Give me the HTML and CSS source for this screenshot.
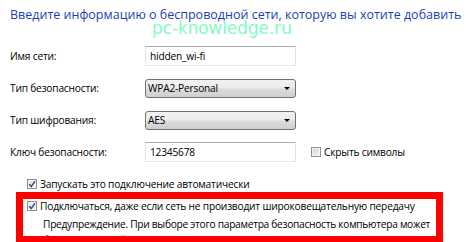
FILE: index.html
```html
<!DOCTYPE html>
<html lang="ru">
<head>
<meta charset="utf-8">
<title>Беспроводная сеть</title>
<link rel="stylesheet" href="styles.css">
</head>
<body>
<div class="dialog">
  <h1 class="title">Введите информацию о беспроводной сети, которую вы хотите добавить</h1>
  <div class="watermark">pc-knowledge.ru</div>

  <div class="form">
    <div class="row">
      <span class="label">Имя сети:</span>
      <div class="field input">hidden_wi-fi</div>
    </div>
    <div class="row">
      <span class="label">Тип безопасности:</span>
      <div class="field select"><span>WPA2-Personal</span><span class="arrow"></span></div>
    </div>
    <div class="row">
      <span class="label">Тип шифрования:</span>
      <div class="field select"><span>AES</span><span class="arrow"></span></div>
    </div>
    <div class="row">
      <span class="label">Ключ безопасности:</span>
      <div class="field input">12345678</div>
      <div class="check side"><span class="box"></span>Скрыть символы</div>
    </div>
  </div>

  <div class="checks">
    <div class="check"><span class="box checked"><svg viewBox="0 0 10 10"><path d="M2.2 5.2 L4.2 7.6 L8 2.2" /></svg></span>Запускать это подключение автоматически</div>
    <div class="check"><span class="box checked"><svg viewBox="0 0 10 10"><path d="M2.2 5.2 L4.2 7.6 L8 2.2" /></svg></span>Подключаться, даже если сеть не производит широковещательную передачу</div>
    <p class="warn">Предупреждение. При выборе этого параметра безопасность компьютера может<br>быть под угрозой.</p>
  </div>

  <div class="highlight"></div>
</div>
</body>
</html>
```

FILE: styles.css
```css
html, body {
  margin: 0;
  padding: 0;
  background: #ffffff;
}

body {
  width: 470px;
  height: 242px;
  overflow: hidden;
  font-family: "Open Sans", "Noto Sans", sans-serif;
  font-size: 10.2px;
  letter-spacing: -0.2px;
  color: #000000;
}

.dialog {
  position: relative;
  width: 470px;
  height: 242px;
  overflow: hidden;
}

.title {
  margin: 7px 0 0 10px;
  font-size: 12.5px;
  letter-spacing: 0;
  line-height: 16px;
  font-weight: normal;
  color: #1b3fb5;
  white-space: nowrap;
}

.watermark {
  position: absolute;
  left: 152px;
  top: 18px;
  font-family: "DejaVu Sans", Verdana, sans-serif;
  font-size: 16.8px;
  letter-spacing: 0;
  line-height: 20px;
  color: #80fcc2;
  white-space: nowrap;
}

.form {
  display: flex;
  flex-direction: column;
  gap: 12px;
  margin-top: 23px;
  padding-left: 10px;
}

.row {
  display: flex;
  align-items: center;
  height: 20px;
}

.label {
  width: 135px;
  flex: none;
  white-space: nowrap;
}

.field {
  box-sizing: border-box;
  width: 151px;
  height: 20px;
  flex: none;
  display: flex;
  align-items: center;
  white-space: nowrap;
}

.input {
  border: 1px solid #dfe4ea;
  border-top-color: #abadb3;
  border-bottom-color: #e3e9ef;
  padding-left: 4px;
  background: #ffffff;
}

.select {
  height: 19px;
  border: 1px solid #707070;
  border-radius: 3px;
  padding: 0 4px 0 2px;
  justify-content: space-between;
  background: linear-gradient(#f2f2f2 0%, #ebebeb 48%, #dddddd 52%, #cfcfcf 100%);
}

.arrow {
  width: 0;
  height: 0;
  border-left: 3px solid transparent;
  border-right: 3px solid transparent;
  border-top: 3px solid #000000;
  margin-right: 1px;
}

.check {
  display: flex;
  align-items: center;
  gap: 3px;
  height: 16px;
  white-space: nowrap;
}

.check.side {
  margin-left: 15px;
}

.box {
  box-sizing: border-box;
  width: 10px;
  height: 10px;
  flex: none;
  border: 1px solid #8e8f8f;
  background: linear-gradient(135deg, #cdd1d6 0%, #e6e8ea 60%, #f4f4f4 100%);
  box-shadow: inset 0 0 0 1px #f4f4f4;
  position: relative;
}

.box.checked {
  background: linear-gradient(135deg, #e0e3e6 0%, #f4f5f6 100%);
}

.box svg {
  position: absolute;
  left: -1px;
  top: -1px;
  width: 10px;
  height: 10px;
}

.box svg path {
  fill: none;
  stroke: #3b4f82;
  stroke-width: 1.5;
}

.checks {
  margin-top: 14px;
  padding-left: 27px;
  display: flex;
  flex-direction: column;
  gap: 6px;
}

.warn {
  margin: -4.5px 0 0 16px;
  line-height: 16px;
  letter-spacing: -0.28px;
  white-space: nowrap;
}

.highlight {
  position: absolute;
  left: 16px;
  top: 192px;
  box-sizing: border-box;
  width: 427px;
  height: 51px;
  border: 7px solid #ff0000;
}
```
